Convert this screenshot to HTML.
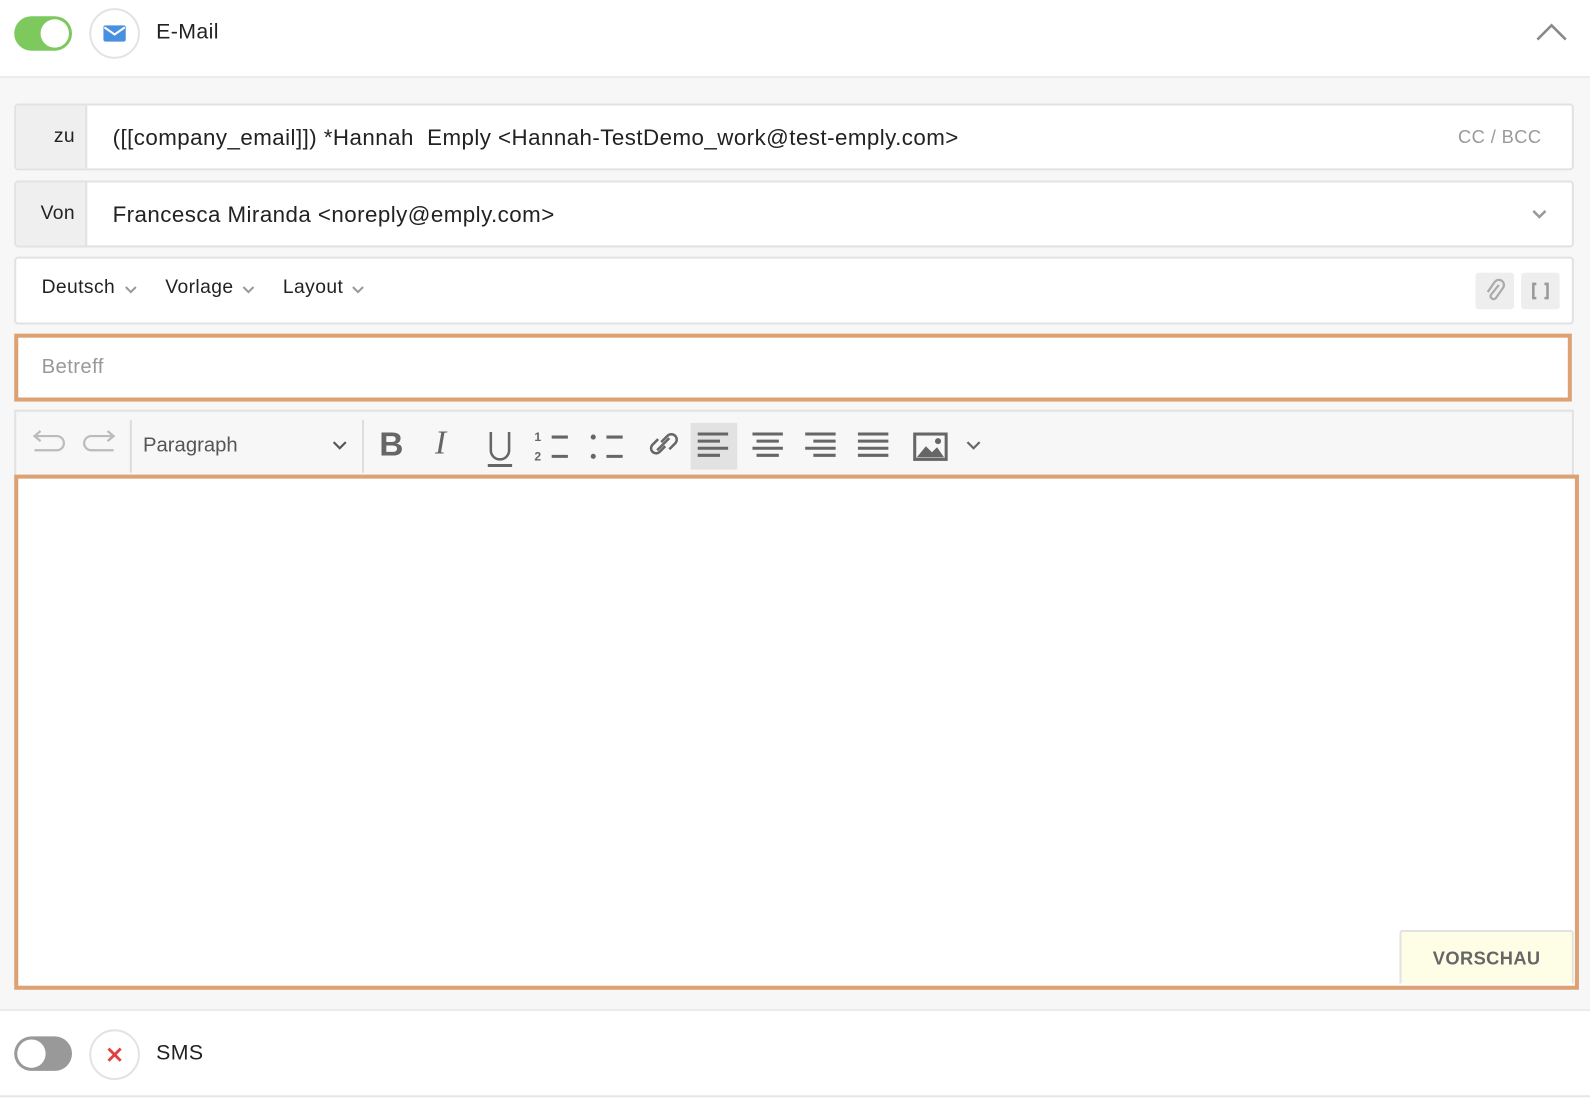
<!DOCTYPE html>
<html><head><meta charset="utf-8"><style>
*{box-sizing:border-box;margin:0;padding:0}
body{width:1590px;height:1102px;background:#fff;font-family:"Liberation Sans",sans-serif;color:#222;overflow:hidden}
#w{position:relative;width:1568px;height:1087px;transform:scale(1.0141);transform-origin:0 0;letter-spacing:.4px}
.abs{position:absolute}
.toggle{width:57px;height:34px;border-radius:17px}
.knob{position:absolute;top:3px;width:28px;height:28px;border-radius:50%;background:#fff}
.circ{width:50px;height:50px;border-radius:50%;border:2px solid #e3e3e3;background:#fff}
.box{background:#fff;border:2px solid #e2e2e2;border-radius:4px}
.lab{background:#efefef;border-right:2px solid #e2e2e2;height:100%;position:absolute;left:0;top:0;width:70px;font-size:19px;text-align:right;padding-right:10px}
</style></head><body><div id="w">
<div class="abs toggle" style="left:14px;top:16px;background:#7dc95e"><div class="knob" style="left:26px"></div></div>
<div class="abs circ" style="left:88px;top:8px"><svg width="46" height="46" viewBox="0 0 46 46"><rect x="12" y="15" width="22" height="16" rx="2" fill="#4a90e2"/><path d="M13 17 L23 24 L33 17" stroke="#fff" stroke-width="2" fill="none"/></svg></div>
<div class="abs" style="left:154px;top:20px;font-size:21px">E-Mail</div>
<svg class="abs" style="left:1514px;top:22px" width="32" height="20"><path d="M2 17 L16 3 L30 17" stroke="#888" stroke-width="2.5" fill="none"/></svg>
<div class="abs" style="left:0;top:75px;width:1568px;height:922px;background:#f7f7f7;border-top:2px solid #ececec;border-bottom:2px solid #ececec"></div>
<div class="abs box" style="left:14px;top:102px;width:1538px;height:66px"><div class="lab" style="line-height:62px">zu</div>
<div class="abs" style="left:95px;top:19px;font-size:22px;letter-spacing:.45px">([[company_email]]) *Hannah&nbsp; Emply &lt;Hannah-TestDemo_work@test-emply.com&gt;</div>
<div class="abs" style="right:30px;top:21px;font-size:18px;color:#999">CC / BCC</div></div>
<div class="abs box" style="left:14px;top:178px;width:1538px;height:66px"><div class="lab" style="line-height:62px">Von</div>
<div class="abs" style="left:95px;top:19px;font-size:22px;letter-spacing:.45px">Francesca Miranda &lt;noreply@emply.com&gt;</div>
<svg class="abs" style="right:24px;top:26px" width="16" height="10"><path d="M2 2 L8 8 L14 2" stroke="#999" stroke-width="2.5" fill="none"/></svg></div>
<div class="abs box" style="left:14px;top:253px;width:1538px;height:67px">
<div class="abs" style="left:25px;top:18px;font-size:19px">Deutsch</div>
<div class="abs" style="left:147px;top:18px;font-size:19px">Vorlage</div>
<div class="abs" style="left:263px;top:18px;font-size:19px">Layout</div>
<svg class="abs" style="left:106px;top:26px" width="260" height="10"><path d="M2 2 L7 7 L12 2 M226 2 L231 7 L236 2" stroke="#999" stroke-width="2" fill="none"/><path d="M118 2 L123 7 L128 2" stroke="#999" stroke-width="2" fill="none"/></svg>
<div class="abs" style="left:1439px;top:14px;width:38px;height:36px;background:#eee;border-radius:3px"><svg width="38" height="36"><path d="M23 12 L15 22 a3 3 0 0 0 5 3 L27 15 a5 5 0 0 0 -8 -6 L12 19" stroke="#aaa" stroke-width="2.2" fill="none"/></svg></div>
<div class="abs" style="left:1484px;top:14px;width:38px;height:36px;background:#eee;border-radius:3px"><svg width="38" height="36"><path d="M15 11 H12 V25 H15 M23 11 H26 V25 H23" stroke="#999" stroke-width="2.5" fill="none"/></svg></div>
</div>
<div class="abs" style="left:14px;top:329px;width:1536px;height:67px;background:#fff;border:4px solid #dda274"></div>
<div class="abs" style="left:41px;top:351px;font-size:20px;color:#999">Betreff</div>
<div class="abs" style="left:14px;top:404px;width:1538px;height:66px;background:#f7f7f7;border:2px solid #e2e2e2;border-bottom:none">
<svg class="abs" style="left:0;top:0" width="1000" height="64">
<path d="M18 38 H40 a7 7 0 0 0 0 -14 H20 M24 19 L18 24 L24 29" stroke="#bbb" stroke-width="2.2" fill="none" transform="translate(0,0)"/>
<path d="M96 38 H74 a7 7 0 0 1 0 -14 H94 M90 19 L96 24 L90 29" stroke="#bbb" stroke-width="2.2" fill="none"/>
<path d="M113 8 V60 M342 8 V60" stroke="#ddd" stroke-width="2"/>
<path d="M313 30 L319 36 L325 30" stroke="#555" stroke-width="2.2" fill="none"/>
<rect x="665" y="11" width="46" height="46" fill="#e2e2e2"/>
<g stroke="#666" stroke-width="3">
<path d="M672 22 H702 M672 29 H694 M672 36 H702 M672 43 H694"/>
<path d="M726 22 H756 M730 29 H752 M726 36 H756 M730 43 H752"/>
<path d="M778 22 H808 M786 29 H808 M778 36 H808 M786 43 H808"/>
<path d="M830 22 H860 M830 29 H860 M830 36 H860 M830 43 H860"/>
<path d="M465 53 H489"/>
<path d="M528 25 H544 M528 44 H544 M582 25 H598 M582 44 H598"/>
</g>
<circle cx="569" cy="25" r="2.5" fill="#666"/><circle cx="569" cy="44" r="2.5" fill="#666"/>
<path d="M468 20 V38 a9 9 0 0 0 18 0 V20" stroke="#666" stroke-width="2.5" fill="none"/>
<path d="M632 38 L644 26 M636 30 L642 24 a5 5 0 0 1 8 7 L644 37 M640 34 L634 40 a5 5 0 0 1 -7 -7 L633 27" stroke="#666" stroke-width="2.5" fill="none"/>
<rect x="886" y="22" width="31" height="25" stroke="#666" stroke-width="3" fill="none"/>
<path d="M888 45 L897 34 L903 40 L908 35 L915 45 Z" fill="#666"/><circle cx="909" cy="29" r="3" fill="#666"/>
<path d="M938 30 L944 36 L950 30" stroke="#666" stroke-width="2.2" fill="none"/>
</svg>
<div class="abs" style="left:125px;top:22px;font-size:20px;color:#555;letter-spacing:0">Paragraph</div>
<div class="abs" style="left:358px;top:13px;font-size:33px;font-weight:bold;color:#666">B</div>
<div class="abs" style="left:413px;top:13px;font-size:33px;font-style:italic;font-family:'Liberation Serif',serif;color:#666">I</div>
<div class="abs" style="left:511px;top:16px;font-size:12px;color:#666;line-height:19px;font-weight:bold">1<br>2</div>
</div>
<div class="abs" style="left:14px;top:468px;width:1543px;height:508px;background:#fff;border:4px solid #dda274"></div>
<div class="abs" style="left:1380px;top:917px;width:172px;height:53px;background:#fefee6;border:2px solid #e2e2e2;border-bottom:none;border-radius:3px 3px 0 0;text-align:center;line-height:52px;font-size:18px;font-weight:bold;color:#666">VORSCHAU</div>
<div class="abs toggle" style="left:14px;top:1022px;background:#999"><div class="knob" style="left:3px"></div></div>
<div class="abs circ" style="left:88px;top:1015px"><svg width="46" height="46"><path d="M17 17 L29 29 M29 17 L17 29" stroke="#e04040" stroke-width="2.8"/></svg></div>
<div class="abs" style="left:154px;top:1027px;font-size:21px">SMS</div>
<div class="abs" style="left:0;top:1080px;width:1568px;height:2px;background:#e6e6e6"></div>
</div></body></html>
